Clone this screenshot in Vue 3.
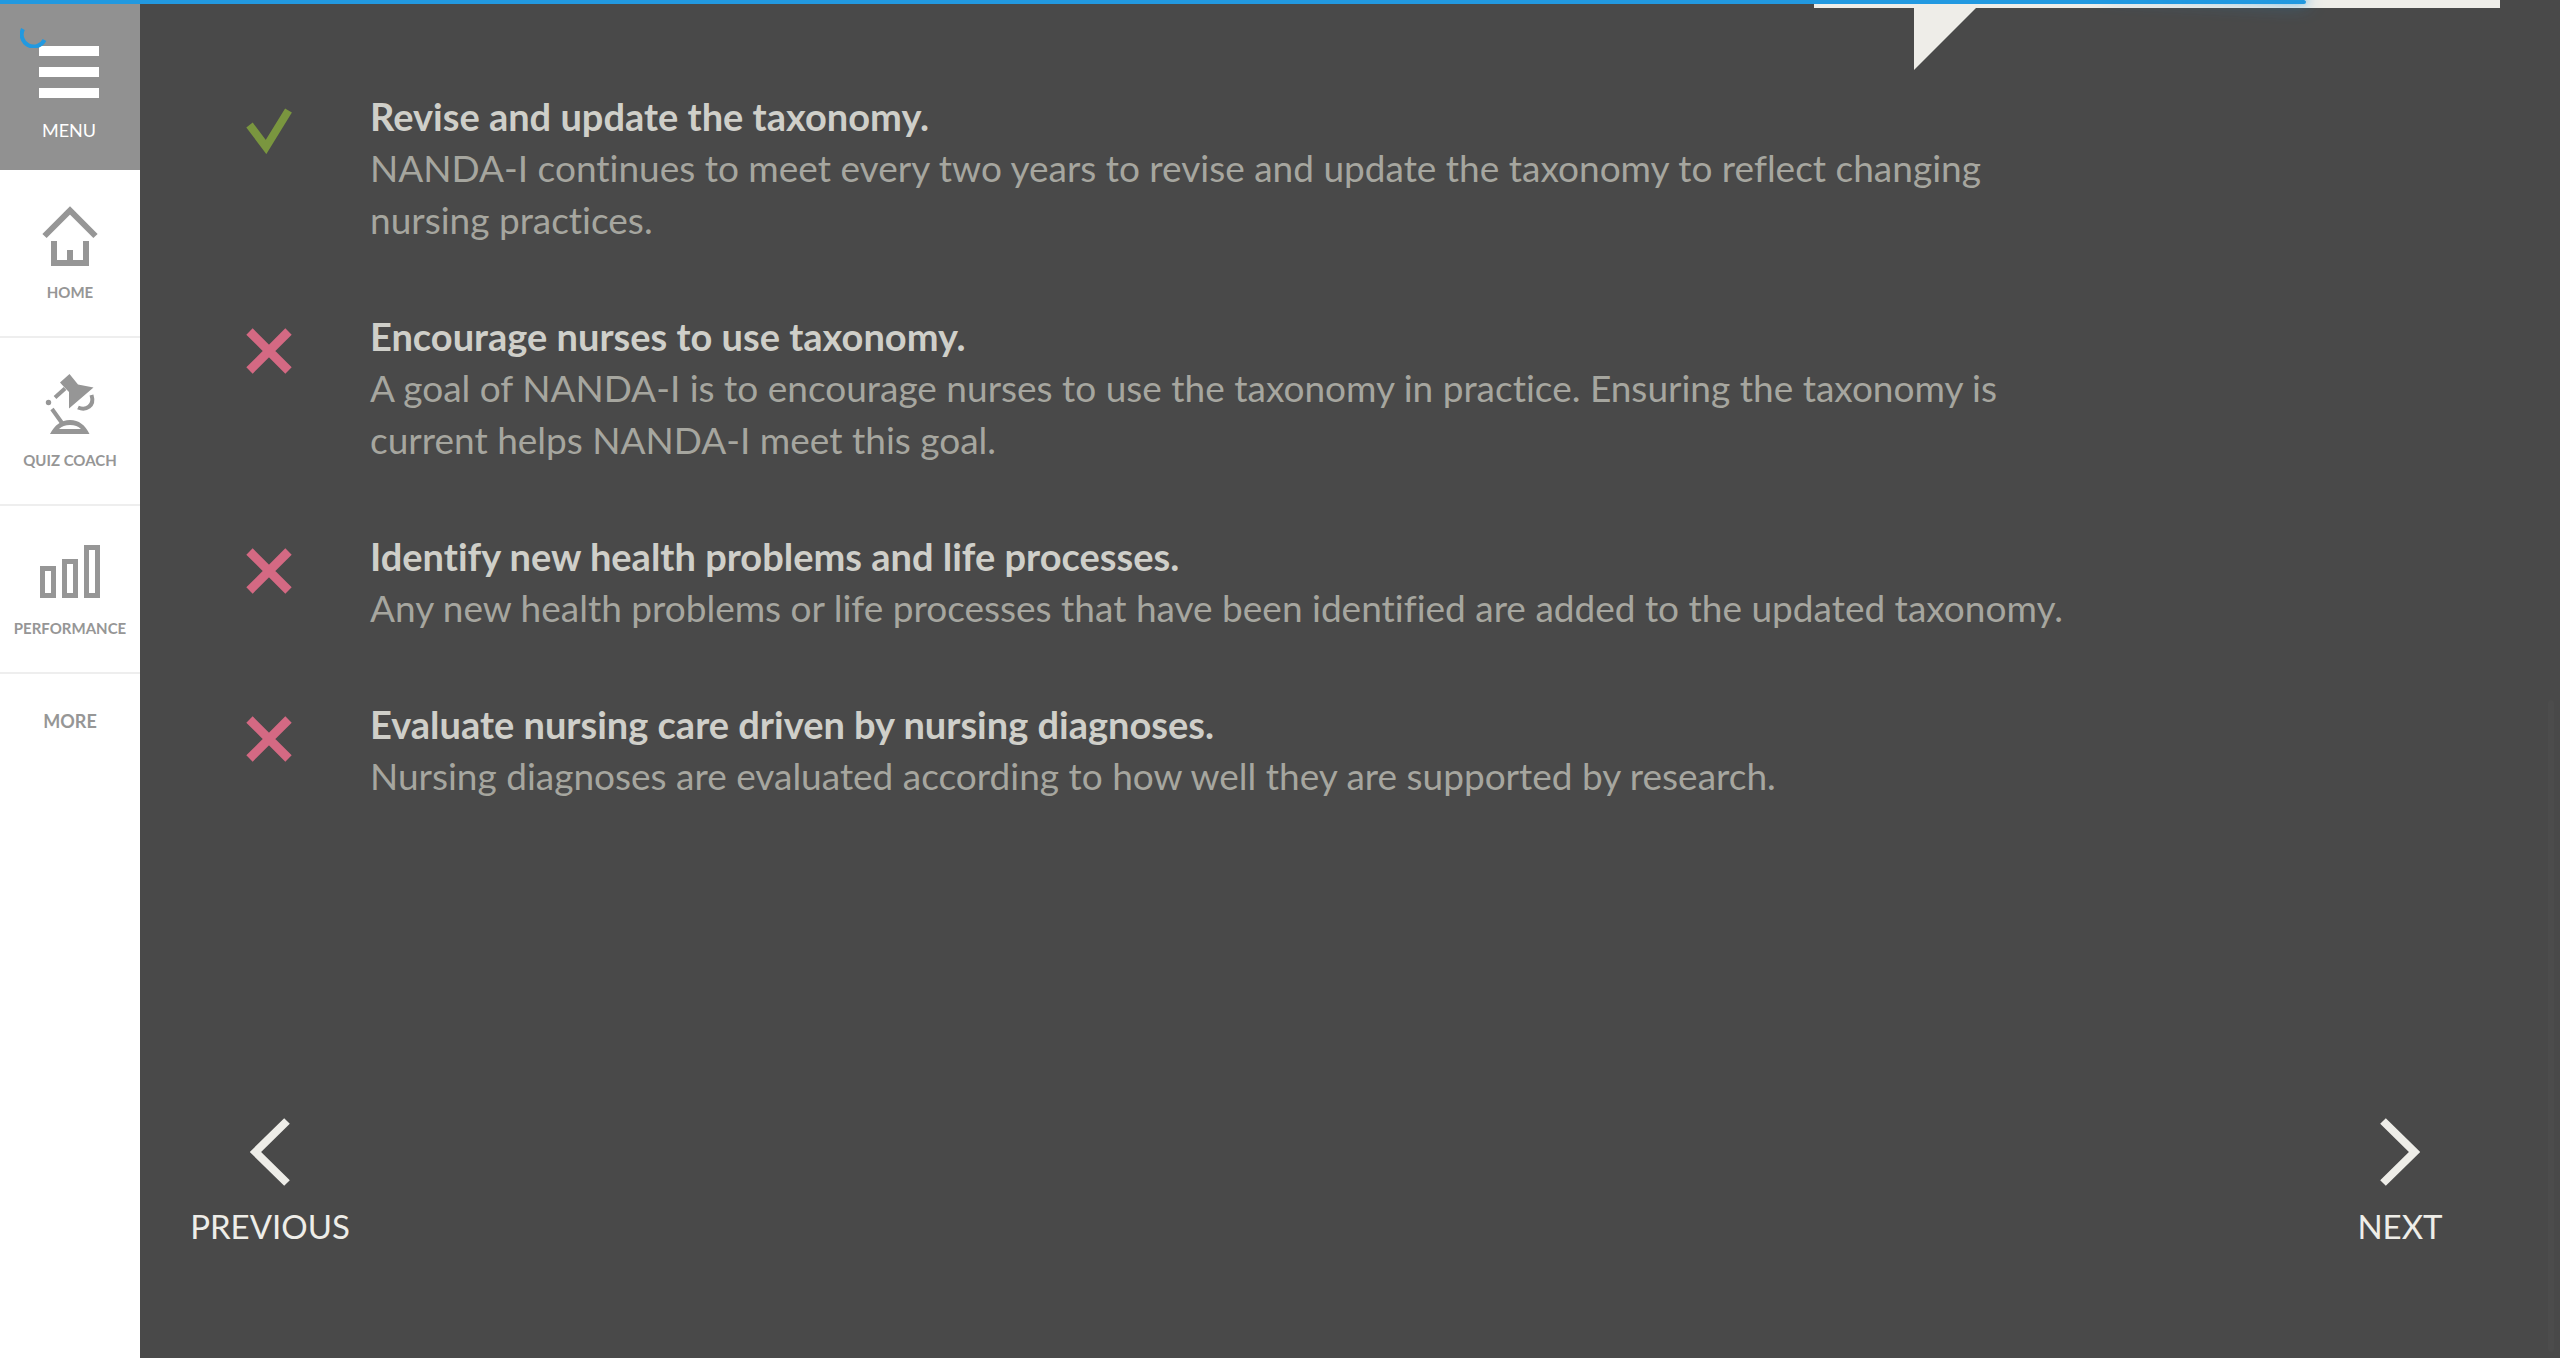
<script setup>
const answers = [
  {
    correct: true,
    title: 'Revise and update the taxonomy.',
    text: 'NANDA-I continues to meet every two years to revise and update the taxonomy to reflect changing nursing practices.',
  },
  {
    correct: false,
    title: 'Encourage nurses to use taxonomy.',
    text: 'A goal of NANDA-I is to encourage nurses to use the taxonomy in practice. Ensuring the taxonomy is current helps NANDA-I meet this goal.',
  },
  {
    correct: false,
    title: 'Identify new health problems and life processes.',
    text: 'Any new health problems or life processes that have been identified are added to the updated taxonomy.',
  },
  {
    correct: false,
    title: 'Evaluate nursing care driven by nursing diagnoses.',
    text: 'Nursing diagnoses are evaluated according to how well they are supported by research.',
  },
]
const progress = 90.08
</script>

<template>
  <div class="app">
    <div class="progress">
      <div class="progress-bar" :style="{ width: progress + '%' }"><i class="peg"></i></div>
    </div>
    <svg class="spinner" width="28" height="28" viewBox="0 0 28 28" aria-hidden="true">
      <path d="M3 9A12 12 0 0 0 24.5 20" fill="none" stroke="#2299e0" stroke-width="4" />
    </svg>

    <nav class="sidebar">
      <button class="menu" type="button">
        <svg width="60" height="52" viewBox="0 0 60 52" aria-hidden="true">
          <path d="M0 0h60v10H0zM0 21h60v10H0zM0 42h60v10H0z" fill="#fff" />
        </svg>
        <span>MENU</span>
      </button>
      <a class="item" href="#home">
        <svg width="80" height="64" viewBox="0 0 80 64" aria-hidden="true">
          <path d="M14.5 32L40 6.5L65.5 32M24 37v22h32V37M40 46v13" fill="none" stroke="#969696" stroke-width="6" />
        </svg>
        <span>HOME</span>
      </a>
      <a class="item" href="#quiz-coach">
        <svg width="80" height="64" viewBox="0 0 80 64" aria-hidden="true">
          <g fill="#969696">
            <path d="M39.5 2L48 12.500L63.5 15.5L39 36.5V20L35 16L30 10.5z" />
            <circle cx="18.5" cy="30.5" r="2.7" />
            <path fill-rule="evenodd" d="M20 62C25 53 31 48 40 48S55 53 59.5 62zM29 57H51Q47 53 40 53T29 57z" />
          </g>
          <path d="M25 25.5L35 16.5M22 37L32 51M61.5 23C65 34 56 39 48 35.5" fill="none" stroke="#969696" stroke-width="4" />
        </svg>
        <span>QUIZ COACH</span>
      </a>
      <a class="item" href="#performance">
        <svg width="80" height="64" viewBox="0 0 80 64" aria-hidden="true">
          <path d="M12.5 28.5h11v27h-11zM34.5 21.5h11v34h-11zM56.5 7.5h11v48h-11z" fill="none" stroke="#969696" stroke-width="5" />
        </svg>
        <span>PERFORMANCE</span>
      </a>
      <a class="more" href="#more">MORE</a>
    </nav>

    <main class="content">
      <div class="bubble"><i class="tail"></i></div>
      <ul class="answers">
        <li v-for="a in answers" :key="a.title" class="answer">
          <svg class="mark" width="46" height="46" viewBox="0 0 46 46" aria-hidden="true">
            <path v-if="a.correct" d="M3.5 17L20 39L42.5 2.5" fill="none" stroke="#7a963f" stroke-width="8" />
            <path v-else d="M3.5 3.5L42.5 42.5M42.5 3.5L3.5 42.5" fill="none" stroke="#d46983" stroke-width="9" />
          </svg>
          <div class="copy">
            <h2>{{ a.title }}</h2>
            <p>{{ a.text }}</p>
          </div>
        </li>
      </ul>
      <div class="pager">
        <button type="button">
          <svg width="40" height="68" viewBox="0 0 40 68" aria-hidden="true">
            <path d="M37 3L5.5 34L37 65" fill="none" stroke="#eeede8" stroke-width="8" />
          </svg>
          <span>PREVIOUS</span>
        </button>
        <button type="button">
          <svg width="40" height="68" viewBox="0 0 40 68" aria-hidden="true">
            <path d="M3 3L34.5 34L3 65" fill="none" stroke="#eeede8" stroke-width="8" />
          </svg>
          <span>NEXT</span>
        </button>
      </div>
      <i class="scroll-thumb"></i>
    </main>
  </div>
</template>

<style>
body {
  margin: 0;
  background: #494949;
}
</style>

<style scoped>
.app {
  position: relative;
  display: flex;
  min-height: 100vh;
  overflow: hidden;
  background: #494949;
  font-family: Lato, "Liberation Sans", sans-serif;
  font-variant-ligatures: none;
}
button {
  border: 0;
  padding: 0;
  background: none;
  font: inherit;
  cursor: pointer;
}
.progress {
  position: absolute;
  top: 0;
  left: 0;
  right: 0;
  z-index: 3;
}
.progress-bar {
  position: relative;
  height: 4px;
  background: #2299e0;
  border-radius: 0 2px 2px 0;
}
.peg {
  position: absolute;
  right: 0;
  width: 200px;
  height: 100%;
  box-shadow: 0 0 20px #2299e0, 0 0 10px #2299e0;
  transform: rotate(3deg) translate(0, -8px);
}
.spinner {
  position: absolute;
  top: 20px;
  left: 20px;
  z-index: 3;
}
.sidebar {
  display: flex;
  flex-direction: column;
  flex: none;
  width: 140px;
  background: #fff;
}
.menu {
  display: flex;
  flex-direction: column;
  align-items: center;
  box-sizing: border-box;
  height: 170px;
  padding: 46px 2px 0 0;
  background: #919191;
  color: #fff;
  font-size: 18px;
  line-height: 24px;
}
.menu span {
  margin-top: 20px;
}
.item {
  display: flex;
  flex-direction: column;
  align-items: center;
  box-sizing: border-box;
  height: 168px;
  padding-top: 34px;
  border-bottom: 2px solid #eee;
  color: #969696;
  font-size: 15px;
  font-weight: 700;
  line-height: 20px;
  text-decoration: none;
}
.item span {
  margin-top: 14px;
}
.more {
  padding-top: 35px;
  color: #969696;
  font-size: 18px;
  font-weight: 700;
  line-height: 24px;
  text-align: center;
  text-decoration: none;
}
.content {
  position: relative;
  display: flex;
  flex-direction: column;
  flex: 1;
  min-width: 0;
}
.bubble {
  position: absolute;
  top: 0;
  right: 60px;
  width: 686px;
  height: 8px;
  background: #eeede8;
}
.tail {
  position: absolute;
  top: 8px;
  left: 100px;
  width: 62px;
  height: 62px;
  background: #eeede8;
  clip-path: polygon(0 0, 100% 0, 0 100%);
}
.answers {
  display: flex;
  flex-direction: column;
  gap: 64px;
  margin: 0;
  padding: 90px 100px 0 106px;
  list-style: none;
}
.answer {
  display: flex;
  gap: 78px;
}
.mark {
  flex: none;
  margin-top: 18px;
}
.copy {
  max-width: 1720px;
  line-height: 52px;
}
h2 {
  margin: 0;
  color: #cfcfc9;
  font-size: 38px;
  font-weight: 700;
}
p {
  margin: 0;
  color: #a6a69f;
  font-size: 37px;
}
.pager {
  display: flex;
  justify-content: space-between;
  margin-top: auto;
  padding: 0 60px 110px 30px;
}
.pager button {
  display: flex;
  flex-direction: column;
  align-items: center;
  min-width: 200px;
  color: #eeede8;
  font-size: 33px;
  line-height: 44px;
}
.pager span {
  margin-top: 18px;
}
.scroll-thumb {
  position: absolute;
  right: 6px;
  bottom: 6px;
  width: 6px;
  height: 48%;
  border-radius: 3px;
  background: #4c4c4c;
}
</style>
